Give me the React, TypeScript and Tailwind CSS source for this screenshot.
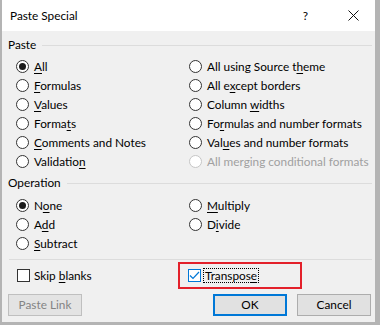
import React from "react";

const font = { fontFamily: 'Lato, "Noto Sans", Arial, sans-serif' };

function L({ text, k }: { text: string; k?: number }) {
  if (k === undefined) return <>{text}</>;
  return (
    <>
      {text.slice(0, k)}
      <u className="underline underline-offset-[2px]">{text[k]}</u>
      {text.slice(k + 1)}
    </>
  );
}

function Radio({ label, k, checked, disabled }: { label: string; k?: number; checked?: boolean; disabled?: boolean }) {
  return (
    <div className="flex h-[19px] items-center">
      <div
        className={
          "flex h-[13px] w-[13px] shrink-0 items-center justify-center rounded-full border bg-white " +
          (disabled ? "border-[#c6c6c6] bg-[#f0f0f0]" : "border-[#333333]")
        }
      >
        {checked && <div className="h-[7px] w-[7px] rounded-full bg-[#1a1a1a]" />}
      </div>
      <span className={"ml-[5px] whitespace-nowrap text-[11.8px] leading-none " + (disabled ? "text-[#a0a0a0]" : "text-black")}>
        <L text={label} k={k} />
      </span>
    </div>
  );
}

function GroupLabel({ text }: { text: string }) {
  return (
    <div className="flex h-[18px] items-center">
      <span className="text-[11.8px] leading-none text-black">{text}</span>
      <div className="ml-[6px] h-px flex-1 bg-[#dcdcdc]" />
    </div>
  );
}

export default function App() {
  return (
    <div
      className="flex h-[325px] w-[380px] flex-col border-b-[3px] border-l-2 border-r-[5px] border-[#b4b4b4] bg-[#f0f0f0]"
      style={font}
    >
      <div className="flex h-[31px] shrink-0 items-center bg-white">
        <span className="ml-[8px] text-[11.8px] text-black">Paste Special</span>
        <div className="flex-1" />
        <span className="mr-[40px] text-[11.8px] text-black">?</span>
        <svg width="11" height="11" viewBox="0 0 11 11" className="mr-[16px]">
          <path d="M0.5 0.5 L10.5 10.5 M10.5 0.5 L0.5 10.5" stroke="#111" strokeWidth="1" />
        </svg>
      </div>
      <div className="flex flex-1 flex-col pl-[6px] pr-[3px] pt-[5px]">
        <GroupLabel text="Paste" />
        <div className="mt-[3px] grid grid-cols-[173px_1fr] pl-[8px]">
          <div className="flex flex-col">
            <Radio label="All" k={0} checked />
            <Radio label="Formulas" k={0} />
            <Radio label="Values" k={0} />
            <Radio label="Formats" k={5} />
            <Radio label="Comments and Notes" k={0} />
            <Radio label="Validation" k={9} />
          </div>
          <div className="flex flex-col">
            <Radio label="All using Source theme" k={18} />
            <Radio label="All except borders" k={5} />
            <Radio label="Column widths" k={7} />
            <Radio label="Formulas and number formats" k={2} />
            <Radio label="Values and number formats" k={3} />
            <Radio label="All merging conditional formats" disabled />
          </div>
        </div>
        <div className="mt-[3px]">
          <GroupLabel text="Operation" />
        </div>
        <div className="mt-[4px] grid grid-cols-[173px_1fr] pl-[8px]">
          <div className="flex flex-col">
            <Radio label="None" k={1} checked />
            <Radio label="Add" k={1} />
            <Radio label="Subtract" k={0} />
          </div>
          <div className="flex flex-col">
            <Radio label="Multiply" k={0} />
            <Radio label="Divide" k={1} />
          </div>
        </div>
        <div className="ml-[1px] mt-[6px] h-px bg-[#dcdcdc]" />
        <div className="mt-[2px] grid h-[27px] grid-cols-[161px_1fr] pl-[9px]">
          <div className="flex items-center">
            <div className="h-[13px] w-[13px] border border-[#333333] bg-white" />
            <span className="ml-[4px] text-[11.8px] leading-none text-black">
              <L text="Skip blanks" k={5} />
            </span>
          </div>
          <div className="flex h-[27px] w-[124px] items-center border-2 border-[#e3202a] pl-[8px]">
            <div className="flex h-[13px] w-[13px] items-center justify-center border border-[#0078d7] bg-white">
              <svg width="11" height="11" viewBox="0 0 11 11">
                <path d="M1 5.5 L4 8.5 L10 2" fill="none" stroke="#0078d7" strokeWidth="1.2" />
              </svg>
            </div>
            <span className="ml-[2px] flex h-[15px] items-center border border-dotted border-black px-[1px] text-[11.8px] leading-none text-black">
              <L text="Transpose" k={8} />
            </span>
          </div>
        </div>
        <div className="mt-[5px] flex h-[22px] items-stretch">
          <div className="flex w-[74px] items-center justify-center border border-[#bfbfbf] bg-[#e3e3e3] text-[11.8px] text-[#838383]">
            Paste Link
          </div>
          <div className="flex-1" />
          <div className="flex w-[74px] items-center justify-center border-2 border-[#0078d7] bg-[#e1e1e1] text-[11.8px] text-black">
            OK
          </div>
          <div className="ml-[10px] mr-[1px] flex w-[74px] items-center justify-center border border-[#adadad] bg-[#e1e1e1] text-[11.8px] text-black">
            Cancel
          </div>
        </div>
      </div>
    </div>
  );
}
